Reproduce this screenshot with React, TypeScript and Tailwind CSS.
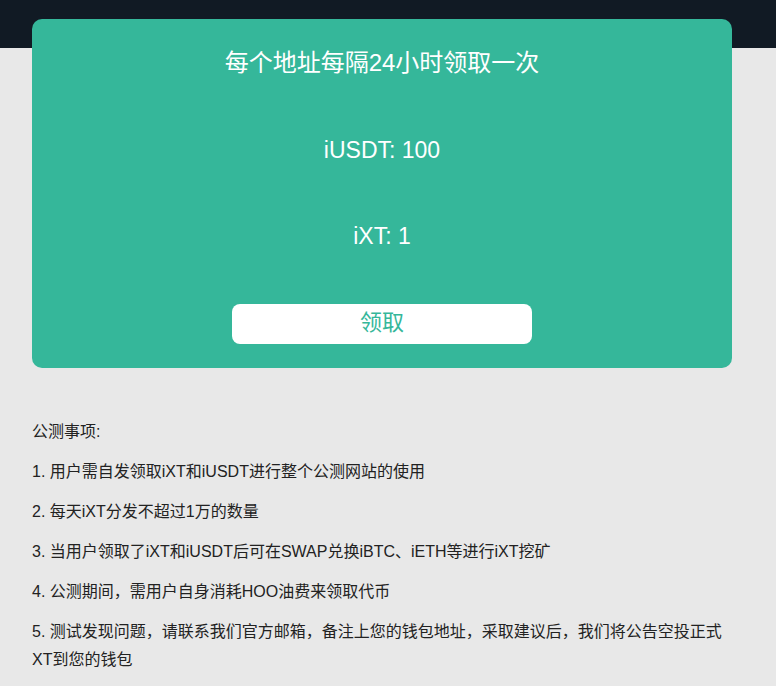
import React from 'react';

const notes = [
  '公测事项:',
  '1. 用户需自发领取iXT和iUSDT进行整个公测网站的使用',
  '2. 每天iXT分发不超过1万的数量',
  '3. 当用户领取了iXT和iUSDT后可在SWAP兑换iBTC、iETH等进行iXT挖矿',
  '4. 公测期间，需用户自身消耗HOO油费来领取代币',
  '5. 测试发现问题，请联系我们官方邮箱，备注上您的钱包地址，采取建议后，我们将公告空投正式XT到您的钱包',
];

const App: React.FC = () => {
  return (
    <div
      className="min-h-screen bg-[#e8e8e8] relative"
      style={{ fontFamily: '"Liberation Sans", "Noto Sans CJK SC", sans-serif' }}
    >
      {/* top bar */}
      <div className="h-12 bg-[#111a24]" />

      <div className="-mt-[29px] mx-8 w-[700px] relative">
        {/* faucet card */}
        <div className="bg-[#35b79a] rounded-[10px] pt-[29px] pb-[24px] flex flex-col items-center text-white">
          <div className="text-[24px] leading-[30px]">每个地址每隔24小时领取一次</div>
          <div className="mt-[57px] text-[23px] leading-[30px] font-light">iUSDT: 100</div>
          <div className="mt-[56px] text-[23px] leading-[30px] font-light">iXT: 1</div>
          <button className="mt-[53px] w-[300px] h-10 bg-white rounded-lg text-[22px] leading-none pb-[2px] text-[#35b79a] flex items-center justify-center">
            领取
          </button>
        </div>

        {/* notes */}
        <div className="mt-[50px] text-base text-[#222222] pb-6">
          {notes.map((line, i) => (
            <p key={i} className="leading-7 mb-3">
              {line}
            </p>
          ))}
        </div>
      </div>
    </div>
  );
};

export default App;
